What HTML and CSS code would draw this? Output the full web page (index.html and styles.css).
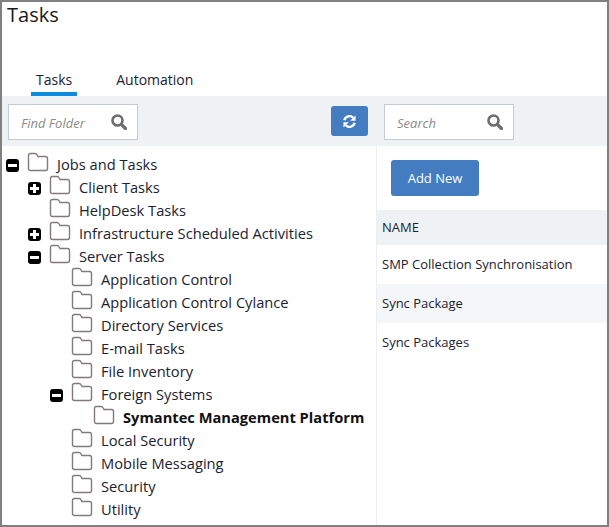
FILE: index.html
```html
<!DOCTYPE html>
<html>
<head>
  <meta charset="utf-8">
  <title>Tasks</title>
  <link rel="stylesheet" href="styles.css">
</head>
<body>
  <svg class="defs" width="0" height="0">
    <symbol id="folder" viewBox="0 0 22 20">
      <path d="M1.500 16.500V3.500Q1.500 1.500 3.500 1.500H8Q9.500 1.500 10.200 3L11 4.500H18.500Q20.500 4.500 20.500 6.500V16.500Q20.500 18.500 18.500 18.500H3.500Q1.500 18.500 1.500 16.500Z" fill="#fff" stroke="#84787a" stroke-width="1.400"/>
    </symbol>
    <symbol id="glass" viewBox="0 0 16 16">
      <circle cx="6.500" cy="6.500" r="5" fill="none" stroke="#6e6e6e" stroke-width="2.600"/>
      <path d="M10.300 10.300L14.500 14.500" stroke="#6e6e6e" stroke-width="3.200" stroke-linecap="round"/>
    </symbol>
  </svg>
  <div class="window">
    <h1 class="title">Tasks</h1>
    <div class="tabs">
      <a class="tab active">Tasks</a>
      <a class="tab">Automation</a>
    </div>
    <div class="toolbar">
      <div class="left-tools">
        <div class="search">
          <span class="hint">Find Folder</span>
          <svg class="glass"><use href="#glass"/></svg>
        </div>
        <button class="refresh">
          <svg width="13" height="13" viewBox="0 0 14 14">
            <path d="M1.500 5.600A5.600 5.600 0 0 1 11 3" fill="none" stroke="#fff" stroke-width="2.600"/>
            <path d="M13.500 0.500V6.300H7.700Z" fill="#fff"/>
            <path d="M12.500 8.400A5.600 5.600 0 0 1 3 11" fill="none" stroke="#fff" stroke-width="2.600"/>
            <path d="M0.500 13.500V7.700H6.300Z" fill="#fff"/>
          </svg>
        </button>
      </div>
      <div class="right-tools">
        <div class="search">
          <span class="hint">Search</span>
          <svg class="glass"><use href="#glass"/></svg>
        </div>
      </div>
    </div>
    <div class="content">
      <ul class="tree">
        <li class="node"><i class="toggle minus"></i><svg class="folder"><use href="#folder"/></svg><span>Jobs and Tasks</span></li>
        <li class="node lvl1"><i class="toggle plus"></i><svg class="folder"><use href="#folder"/></svg><span>Client Tasks</span></li>
        <li class="node lvl1"><i class="toggle none"></i><svg class="folder"><use href="#folder"/></svg><span>HelpDesk Tasks</span></li>
        <li class="node lvl1"><i class="toggle plus"></i><svg class="folder"><use href="#folder"/></svg><span>Infrastructure Scheduled Activities</span></li>
        <li class="node lvl1"><i class="toggle minus"></i><svg class="folder"><use href="#folder"/></svg><span>Server Tasks</span></li>
        <li class="node lvl2"><i class="toggle none"></i><svg class="folder"><use href="#folder"/></svg><span>Application Control</span></li>
        <li class="node lvl2"><i class="toggle none"></i><svg class="folder"><use href="#folder"/></svg><span>Application Control Cylance</span></li>
        <li class="node lvl2"><i class="toggle none"></i><svg class="folder"><use href="#folder"/></svg><span>Directory Services</span></li>
        <li class="node lvl2"><i class="toggle none"></i><svg class="folder"><use href="#folder"/></svg><span>E-mail Tasks</span></li>
        <li class="node lvl2"><i class="toggle none"></i><svg class="folder"><use href="#folder"/></svg><span>File Inventory</span></li>
        <li class="node lvl2"><i class="toggle minus"></i><svg class="folder"><use href="#folder"/></svg><span>Foreign Systems</span></li>
        <li class="node lvl3"><i class="toggle none"></i><svg class="folder"><use href="#folder"/></svg><span class="selected">Symantec Management Platform</span></li>
        <li class="node lvl2"><i class="toggle none"></i><svg class="folder"><use href="#folder"/></svg><span>Local Security</span></li>
        <li class="node lvl2"><i class="toggle none"></i><svg class="folder"><use href="#folder"/></svg><span>Mobile Messaging</span></li>
        <li class="node lvl2"><i class="toggle none"></i><svg class="folder"><use href="#folder"/></svg><span>Security</span></li>
        <li class="node lvl2"><i class="toggle none"></i><svg class="folder"><use href="#folder"/></svg><span>Utility</span></li>
      </ul>
      <div class="panel">
        <button class="add-new">Add New</button>
        <div class="grid-head">NAME</div>
        <div class="grid-row">SMP Collection Synchronisation</div>
        <div class="grid-row alt">Sync Package</div>
        <div class="grid-row">Sync Packages</div>
      </div>
    </div>
  </div>
</body>
</html>
```

FILE: styles.css
```css
* {
  margin: 0;
  padding: 0;
  box-sizing: border-box;
}
body {
  background: #fff;
  color: #1a2230;
  font: 14.67px/23px "Open Sans", sans-serif;
}
.defs {
  position: absolute;
}
.window {
  width: 609px;
  height: 527px;
  border: 2px solid #808080;
  display: flex;
  flex-direction: column;
  overflow: hidden;
}
.title {
  font-size: 20px;
  font-weight: 400;
  line-height: 26px;
  padding-left: 5px;
  height: 65px;
  color: #1a1a1a;
}
.tabs {
  display: flex;
  height: 29px;
  padding-left: 29px;
  gap: 29px;
}
.tab {
  padding: 1px 5px 0;
  height: 29px;
  line-height: 24px;
  font-size: 14px;
}
.tab.active {
  border-bottom: 4px solid #0b8ce0;
}
.tab:not(.active) {
  padding-left: 10px;
}
.toolbar {
  display: flex;
  height: 50px;
  background: #eff2f5;
}
.left-tools {
  width: 375px;
  display: flex;
  align-items: flex-start;
  justify-content: space-between;
  padding: 8px 9px 0 6px;
}
.right-tools {
  padding: 8px 0 0 7px;
}
.search {
  width: 130px;
  height: 36px;
  background: #fff;
  border: 1px solid #c0ccd8;
  display: flex;
  align-items: center;
  justify-content: space-between;
  padding: 0 10px 0 12px;
  font-size: 13px;
  font-style: italic;
  color: #8a8a8a;
}
.hint {
  padding-top: 2px;
}
.glass {
  width: 16px;
  height: 16px;
}
.refresh {
  width: 37px;
  height: 30px;
  margin-top: 2px;
  background: #437cc0;
  border: 0;
  border-radius: 3px;
  display: flex;
  align-items: center;
  justify-content: center;
}
.content {
  flex: 1;
  display: flex;
  min-height: 0;
}
.tree {
  width: 375px;
  list-style: none;
  padding: 7px 0 0 4px;
  border-right: 1px solid #eceff2;
}
.node {
  height: 23px;
  display: flex;
  align-items: center;
  white-space: nowrap;
}
.lvl1 {
  padding-left: 22px;
}
.lvl2 {
  padding-left: 44px;
}
.lvl3 {
  padding-left: 66px;
}
.toggle {
  width: 13px;
  height: 13px;
  margin: 1px 9px 0 0;
  flex: none;
  position: relative;
  background: #000;
  border-radius: 3px;
}
.toggle.none {
  background: none;
}
.minus::before,
.plus::before,
.plus::after {
  content: "";
  position: absolute;
  background: #fff;
}
.minus::before,
.plus::before {
  left: 2px;
  top: 5px;
  width: 9px;
  height: 3px;
}
.plus::after {
  left: 5px;
  top: 2px;
  width: 3px;
  height: 9px;
}
.folder {
  width: 22px;
  height: 20px;
  margin: -5px 8px 0 -1px;
  flex: none;
}
.selected {
  font-weight: 700;
  color: #111;
}
.panel {
  flex: 1;
  padding-top: 14px;
  font-size: 13px;
}
.add-new {
  display: block;
  width: 88px;
  height: 36px;
  margin: 0 0 14px 14px;
  background: #437cc0;
  border: 0;
  border-radius: 3px;
  color: #fff;
  font: 13px "Open Sans", sans-serif;
}
.grid-head {
  height: 35px;
  line-height: 35px;
  padding-left: 5px;
  background: #eff2f5;
}
.grid-row {
  height: 39px;
  line-height: 39px;
  padding-left: 5px;
}
.grid-row.alt {
  background: #f5f6f8;
}
```
